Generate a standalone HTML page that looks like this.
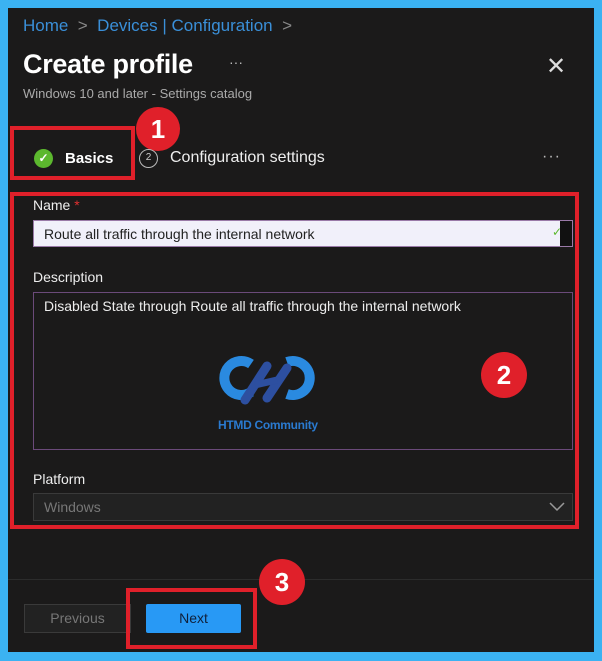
<!DOCTYPE html>
<html><head><meta charset="utf-8"><style>
*{margin:0;padding:0;box-sizing:border-box}
body{width:602px;height:661px;background:#3bb2f2;font-family:"Liberation Sans",sans-serif;position:relative;overflow:hidden}
.panel{position:absolute;left:8px;top:8px;width:586px;height:644px;background:#1b1a1a}
.a{position:absolute;white-space:nowrap}
.red{position:absolute;border:4px solid #e0202a}
.badge{position:absolute;border-radius:50%;background:#e0202a;color:#fff;font-weight:bold;display:flex;align-items:center;justify-content:center;font-size:26px}
</style></head><body>
<div class="panel"></div>
<div class="a" style="left:23px;top:16px;font-size:17px;color:#3a8fd8">Home <span style="color:#888">&nbsp;&gt;&nbsp;</span> Devices | Configuration <span style="color:#888">&nbsp;&gt;</span></div>
<div class="a" style="left:23px;top:49px;font-size:27px;color:#fff;font-weight:bold;letter-spacing:-0.3px">Create profile</div>
<div class="a" style="left:229px;top:54px;font-size:14px;color:#bbb">···</div>
<div class="a" style="left:546px;top:52px;font-size:24px;color:#ddd">✕</div>
<div class="a" style="left:23px;top:86px;font-size:13px;color:#aaa">Windows 10 and later - Settings catalog</div>
<div class="red" style="left:10px;top:126px;width:125px;height:54px"></div>
<div class="badge" style="left:136px;top:107px;width:44px;height:44px">1</div>
<div class="a" style="left:34px;top:149px;width:19px;height:19px;border-radius:50%;background:#5cb82e;color:#fff;font-size:12px;font-weight:bold;text-align:center;line-height:19px">✓</div>
<div class="a" style="left:65px;top:150px;font-size:15px;color:#fff;font-weight:bold">Basics</div>
<div class="a" style="left:139px;top:149px;width:19px;height:19px;border-radius:50%;border:1.5px solid #bbb;color:#ccc;font-size:10px;text-align:center;line-height:16px">2</div>
<div class="a" style="left:170px;top:149px;font-size:16px;color:#eee">Configuration settings</div>
<div class="a" style="left:542px;top:148px;font-size:16px;color:#bbb;letter-spacing:1px">···</div>
<div class="red" style="left:10px;top:192px;width:569px;height:337px"></div>
<div class="a" style="left:33px;top:197px;font-size:14px;color:#eee">Name <span style="color:#e03030">*</span></div>
<div class="a" style="left:33px;top:220px;width:540px;height:27px;background:#f1f0fa;border:1px solid #9a7aa8"></div>
<div class="a" style="left:44px;top:226px;font-size:14px;color:#222">Route all traffic through the internal network</div>
<div class="a" style="left:560px;top:221px;width:12px;height:25px;background:#111"></div>
<div class="a" style="left:552px;top:225px;font-size:12px;color:#5cb82e">✓</div>
<div class="a" style="left:33px;top:269px;font-size:14px;color:#eee">Description</div>
<div class="a" style="left:33px;top:292px;width:540px;height:158px;border:1px solid #6b4a7a"></div>
<div class="a" style="left:44px;top:298px;font-size:14px;color:#eee">Disabled State through Route all traffic through the internal network</div>
<svg class="a" style="left:215px;top:352px" width="110" height="60" viewBox="0 0 110 60">
<path d="M36 12 A17 17 0 1 0 36 40" fill="none" stroke="#2a8ae0" stroke-width="10"/>
<path d="M72 10 A17 17 0 1 1 72 42" fill="none" stroke="#2a8ae0" stroke-width="10"/>
<path d="M30 48 L52 14" stroke="#2d4fa0" stroke-width="9" stroke-linecap="round"/>
<path d="M52 46 L72 16" stroke="#2d4fa0" stroke-width="9" stroke-linecap="round"/>
<path d="M40 33 L62 28" stroke="#2d4fa0" stroke-width="7"/>
</svg>
<div class="a" style="left:218px;top:418px;font-size:12px;font-weight:bold;color:#2a7ad0;letter-spacing:-0.3px">HTMD Community</div>
<div class="badge" style="left:481px;top:352px;width:46px;height:46px">2</div>
<div class="a" style="left:33px;top:471px;font-size:14px;color:#eee">Platform</div>
<div class="a" style="left:33px;top:493px;width:540px;height:28px;background:#222;border:1px solid #3a3a3a"></div>
<div class="a" style="left:44px;top:499px;font-size:14px;color:#777">Windows</div>
<svg class="a" style="left:549px;top:502px" width="16" height="10"><path d="M1 1 L8 8 L15 1" fill="none" stroke="#999" stroke-width="1.5"/></svg>
<div class="a" style="left:8px;top:579px;width:586px;height:1px;background:#2c2c2c"></div>
<div class="a" style="left:24px;top:604px;width:107px;height:29px;border:1px solid #3a3a3a;background:#222;color:#777;font-size:14px;text-align:center;line-height:27px">Previous</div>
<div class="red" style="left:126px;top:588px;width:131px;height:61px"></div>
<div class="a" style="left:146px;top:604px;width:95px;height:29px;background:#2899f5;border-radius:2px;color:#10203a;font-size:14px;text-align:center;line-height:29px">Next</div>
<div class="badge" style="left:259px;top:559px;width:46px;height:46px">3</div>
</body></html>
